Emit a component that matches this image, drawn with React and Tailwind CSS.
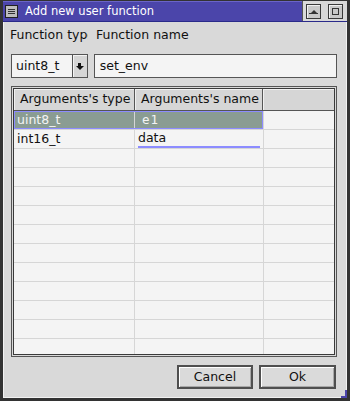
import React from 'react';

const rows = [
  { type: 'uint8_t', name: 'e1', selected: true },
  { type: 'int16_t', name: 'data', editing: true },
  ...Array.from({ length: 11 }, () => ({ type: '', name: '' })),
];

const TitleButton = ({ children }) => (
  <div className="w-[15px] h-[15px] border border-[#3a3a3a] bg-[#c8c8c8] flex items-center justify-center shadow-[inset_1px_1px_0_#f0f0f0]">
    {children}
  </div>
);

const Button = ({ label, w }) => (
  <button className={`${w} h-[24px] border-2 border-[#4f4f4f] bg-[#dadada] shadow-[inset_1px_1px_0_#ffffff,inset_-1px_-1px_0_#a8a8a8] text-[12.5px] text-[#111]`}>
    {label}
  </button>
);

export default function App() {
  return (
    <div className="w-[350px] h-[401px] bg-[#d9d9d9] flex flex-col border-t border-x-[3px] border-b-[3px] border-[#333] text-[12.5px] text-[#111] font-['DejaVu_Sans',sans-serif] relative overflow-hidden">
      {/* TITLE BAR */}
      <div className="h-[21px] flex border-b border-[#2a2a8a]">
        <div className="flex-1 flex items-center gap-[7px] pl-[2px] bg-[#4b45aa] shadow-[inset_0_1px_0_#6a64c8]">
          <div className="w-[13px] h-[13px] border border-[#222] bg-[#bdbdbd] flex flex-col justify-center gap-[1px] px-[2px]">
            <div className="h-[1px] bg-[#333]" />
            <div className="h-[1px] bg-[#333]" />
            <div className="h-[1px] bg-[#333]" />
          </div>
          <span className="text-white text-[11.5px] leading-none whitespace-nowrap mt-[2px]">Add new user function</span>
        </div>
        <div className="w-[45px] bg-[#d9d9d9] flex items-center gap-[7px] pl-[3px] border-l border-[#555]">
          <TitleButton>
            <div className="w-[9px] h-[5px] border-b border-[#333] flex justify-center items-end">
              <div className="w-0 h-0 border-x-[3px] border-x-transparent border-b-[3px] border-b-[#333]" />
            </div>
          </TitleButton>
          <TitleButton>
            <div className="w-[7px] h-[7px] border border-[#333]" />
          </TitleButton>
        </div>
      </div>

      {/* BODY */}
      <div className="flex-1 flex flex-col border-l border-r border-b border-[#f2f2f2] pl-[6px] pr-[9px]">
        <div className="mt-[6px] h-[15px] flex items-center whitespace-nowrap">
          <span className="w-[78px] overflow-hidden">Function type</span>
          <span className="ml-[8px]">Function name</span>
        </div>

        <div className="mt-[11px] h-[24px] flex gap-[6px] pl-[1px]">
          <div className="w-[77px] flex border border-[#555]">
            <div className="flex-1 bg-[#f4f4f4] flex items-center pl-[4px]">uint8_t</div>
            <div className="w-[15px] bg-[#d6d6d6] border-l border-[#555] flex flex-col items-center justify-center shadow-[inset_1px_1px_0_#f4f4f4]">
              <div className="w-[3px] h-[3px] bg-[#111]" />
              <div className="w-0 h-0 border-x-[4px] border-x-transparent border-t-[4px] border-t-[#111]" />
            </div>
          </div>
          <div className="w-[244px] border border-[#555] bg-[#f4f4f4] flex items-center pl-[5px]">set_env</div>
        </div>

        {/* TABLE */}
        <div className="mt-[8px] h-[271px] ml-[1px] border border-[#555] p-[1px] flex flex-col">
          <div className="flex-1 border border-[#3a3a3a] bg-[#f4f4f4] flex flex-col overflow-hidden">
            <div className="h-[22px] flex bg-[#d6d6d6] border-b border-[#555] shrink-0 whitespace-nowrap">
              <div className="w-[121px] border-r border-[#555] flex items-center pl-[6px] shadow-[inset_1px_1px_0_#f0f0f0]">Arguments's type</div>
              <div className="w-[128px] border-r border-[#555] flex items-center pl-[6px] shadow-[inset_1px_1px_0_#f0f0f0]">Arguments's name</div>
              <div className="flex-1 shadow-[inset_1px_1px_0_#f0f0f0]" />
            </div>
            {rows.map((r, i) => (
              <div key={i} className="h-[19px] flex shrink-0 border-b border-[#d6d6d6]">
                <div className={`w-[249px] flex ${r.selected ? 'bg-[#8a9c93] outline outline-1 outline-[#8c8cff] -outline-offset-1 text-[#f4f4f4]' : ''}`}>
                  <div className="w-[121px] border-r border-[#d6d6d6] flex items-center pl-[3px]">{r.type}</div>
                  <div className="w-[128px] flex items-center pl-[3px]">
                    {r.selected && <span className="pl-[4px] font-['DejaVu_Sans_Mono',monospace] tracking-[1px]">{r.name}</span>}
                    {r.editing && <div className="w-[122px] h-full border-b-2 border-[#8c8cff] flex items-center">{r.name}</div>}
                  </div>
                </div>
                <div className="flex-1 border-l border-[#d6d6d6]" />
              </div>
            ))}
          </div>
        </div>

        {/* BUTTONS */}
        <div className="mt-[8px] flex justify-end gap-[6px] pr-[1px]">
          <Button label="Cancel" w="w-[76px]" />
          <Button label="Ok" w="w-[77px]" />
        </div>
      </div>

      <div className="absolute right-0 bottom-0 w-[6px] h-[8px] border-r-2 border-b-2 border-[#4b45aa]" />
    </div>
  );
}
